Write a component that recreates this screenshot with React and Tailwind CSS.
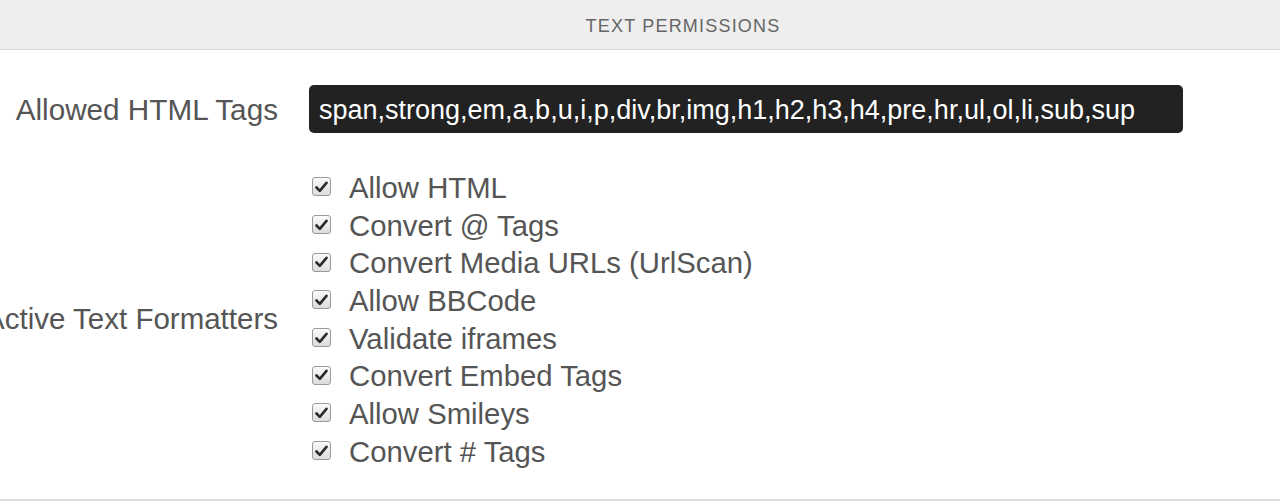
import React from 'react';

const formatters = [
  'Allow HTML',
  'Convert @ Tags',
  'Convert Media URLs (UrlScan)',
  'Allow BBCode',
  'Validate iframes',
  'Convert Embed Tags',
  'Allow Smileys',
  'Convert # Tags',
];

const CheckBox = () => (
  <span className="flex h-[19px] w-[19px] shrink-0 items-center justify-center rounded-[3px] border border-[#9a9a9a] bg-gradient-to-b from-[#fbfbfb] to-[#dcdcdc]">
    <svg width="13" height="12" viewBox="0 0 13 12">
      <path d="M1.5 6.5 L4.8 9.8 L11.5 1.8" fill="none" stroke="#2b2b2b" strokeWidth="2.6" strokeLinecap="round" strokeLinejoin="round" />
    </svg>
  </span>
);

const App = () => {
  return (
    <div className="h-[501px] w-[1280px] overflow-hidden bg-white font-['Liberation_Sans',Arial,sans-serif] text-[#555]">
      <div className="flex h-[50px] items-center justify-center border-b border-[#dadada] bg-[#eeeeee] pl-[86px] pt-[3px]">
        <span className="text-[18px] uppercase tracking-[1.2px] text-[#666]">Text Permissions</span>
      </div>

      <div className="border-b-2 border-[#dddddd] pb-[29px] pt-[35px]">
        {/* allowed tags */}
        <div className="flex items-center gap-[31px]">
          <div className="flex w-[278px] shrink-0 justify-end pt-[2px]">
            <span className="whitespace-nowrap text-[29.7px]">Allowed HTML Tags</span>
          </div>
          <div className="flex h-[48px] w-[874px] items-center rounded-[5px] bg-[#222] px-[10px] pt-[2px] text-[27px] text-white">
            span,strong,em,a,b,u,i,p,div,br,img,h1,h2,h3,h4,pre,hr,ul,ol,li,sub,sup
          </div>
        </div>

        {/* formatters */}
        <div className="mt-[35px] flex items-center gap-[31px]">
          <div className="flex w-[278px] shrink-0 justify-end">
            <span className="whitespace-nowrap text-[29.5px]">Active Text Formatters</span>
          </div>
          <div className="flex flex-col pl-[3px]">
            {formatters.map((f) => (
              <label key={f} className="flex h-[37.7px] items-center gap-[18px]">
                <CheckBox />
                <span className="whitespace-nowrap pt-[2px] text-[29.3px]">{f}</span>
              </label>
            ))}
          </div>
        </div>
      </div>
    </div>
  );
};

export default App;
